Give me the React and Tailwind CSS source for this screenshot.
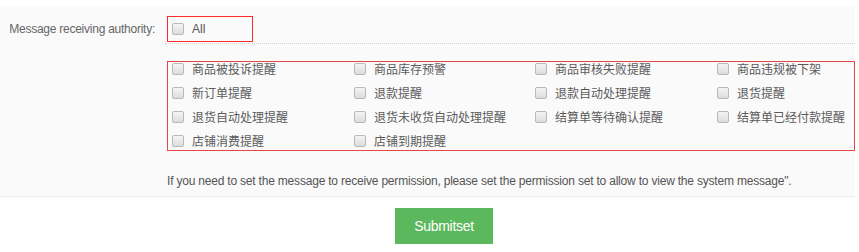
import React from "react";

const items = [
  "商品被投诉提醒",
  "商品库存预警",
  "商品审核失败提醒",
  "商品违规被下架",
  "新订单提醒",
  "退款提醒",
  "退款自动处理提醒",
  "退货提醒",
  "退货自动处理提醒",
  "退货未收货自动处理提醒",
  "结算单等待确认提醒",
  "结算单已经付款提醒",
  "店铺消费提醒",
  "店铺到期提醒",
];

const Box = () => (
  <span className="inline-block w-[12px] h-[12px] shrink-0 rounded-[2px] border border-[#b9b9b9] bg-gradient-to-b from-[#f4f4f4] to-[#dcdcdc]"></span>
);

const App = () => {
  return (
    <div className="w-[859px] h-[252px] bg-white pt-[6px] font-['Liberation_Sans','Noto_Sans_CJK_SC',sans-serif] text-[#555]">
      <div className="bg-[#fafafa] border-b border-[#ebebeb] mr-[4px]">
        {/* row 1 */}
        <div className="flex">
          <div className="w-[165px] shrink-0 text-right pr-[10px] pt-[14px] text-[12px] tracking-[-0.25px] text-[#666]">
            Message receiving authority:
          </div>
          <div className="flex-1 border-b border-dotted border-[#d0d0d0] pt-[10px] pb-[1px] pl-[2px]">
            <div className="w-[86px] h-[26px] border border-[#ff2a2a] flex items-center pl-[4px] gap-[8px]">
              <Box />
              <span className="text-[12px]">All</span>
            </div>
          </div>
        </div>

        {/* row 2 */}
        <div className="pl-[167px] pt-[17px]">
          <div className="w-[688px] border border-[#e84545] pb-[2px] overflow-hidden">
            <div className="grid grid-cols-[182px_181px_182px_1fr] gap-y-[10px]">
              {items.map((t) => (
                <div key={t} className="flex items-center h-[14px] pl-[4px] gap-[8px]">
                  <Box />
                  <span className="text-[12px] leading-[14px] whitespace-nowrap text-[#5a5a5a] font-['Noto_Sans_CJK_SC',sans-serif]">
                    {t}
                  </span>
                </div>
              ))}
            </div>
          </div>
        </div>

        {/* row 3 */}
        <div className="pl-[167px] pt-[22px] pb-[7px] text-[12px] leading-[16px] tracking-[-0.2px]">
          If you need to set the message to receive permission, please set the permission set to allow to view the system message".
        </div>
      </div>

      <div className="pl-[395px] pt-[11px]">
        <button className="w-[98px] h-[36px] bg-[#5cb85c] text-white text-[14px] tracking-[-0.3px]">
          Submitset
        </button>
      </div>
    </div>
  );
};

export default App;
